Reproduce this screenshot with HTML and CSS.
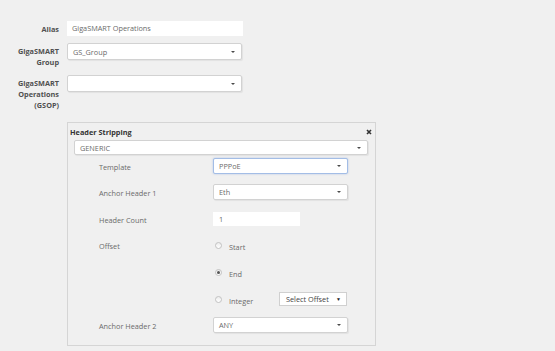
FILE: index.html
```html
<!DOCTYPE html>
<html>
<head>
<title>GigaSMART Operations</title>
<link rel="stylesheet" href="styles.css">
</head>
<body>
<div class="form">
  <div class="label">Alias</div>
  <div class="input">GigaSMART Operations</div>

  <div class="label">GigaSMART<br>Group</div>
  <div class="select big"><span>GS_Group</span><i class="caret"></i></div>

  <div class="label">GigaSMART<br>Operations<br>(GSOP)</div>
  <div class="select big"><span></span><i class="caret"></i></div>

  <div></div>
  <div class="panel">
    <div class="panel-head">
      <span>Header Stripping</span>
      <svg class="close" width="6" height="6" viewBox="0 0 6 6"><path d="M1 1L5 5M5 1L1 5" stroke="#333" stroke-width="1.6"/></svg>
    </div>
    <div class="select generic"><span>GENERIC</span><i class="caret"></i></div>

    <div class="rows">
      <div class="row">
        <div class="row-label">Template</div>
        <div class="select small focus"><span>PPPoE</span><i class="caret"></i></div>
      </div>
      <div class="row">
        <div class="row-label">Anchor Header 1</div>
        <div class="select small"><span>Eth</span><i class="caret"></i></div>
      </div>
      <div class="row sp">
        <div class="row-label">Header Count</div>
        <div class="count">1</div>
      </div>
      <div class="row">
        <div class="row-label">Offset</div>
        <div class="radio"><i class="dot"></i><span>Start</span></div>
      </div>
      <div class="row sp">
        <div class="row-label"></div>
        <div class="radio"><i class="dot on"></i><span>End</span></div>
      </div>
      <div class="row sp">
        <div class="row-label"></div>
        <div class="radio-line">
          <div class="radio wide"><i class="dot"></i><span>Integer</span></div>
          <div class="native"><span>Select Offset</span><span class="tri">&#9660;</span></div>
        </div>
      </div>
      <div class="row">
        <div class="row-label">Anchor Header 2</div>
        <div class="select small"><span>ANY</span><i class="caret"></i></div>
      </div>
    </div>
  </div>
</div>
</body>
</html>
```

FILE: styles.css
```css
/* GigaSMART operation form */

body
{ margin: 0;
background: #f0f0f0;
font-family: "Open Sans", sans-serif;
font-size: 7.3px;
color: #6a6a6a;
}

.form
{ display: grid;
grid-template-columns: 59px auto;
column-gap: 8px;
row-gap: 7px;
padding-top: 21px;
align-items: start;
}

.label
{ text-align: right;
font-weight: bold;
color: #505050;
line-height: 11px;
padding-top: 3px;
}

.input
{ width: 176px;
height: 15px;
line-height: 15px;
box-sizing: border-box;
padding-left: 5px;
background: #fff;
}

.select
{ box-sizing: border-box;
display: flex;
align-items: center;
justify-content: space-between;
background: #fff;
border: 1px solid #d2d2d2;
border-radius: 2px;
box-shadow: 1px 1px 1px rgba(0, 0, 0, 0.06);
padding: 0 6px 0 5px;
}

.select.big
{ width: 175px;
height: 17px;
}

.select.small
{ width: 135px;
height: 16px;
}

.select.focus
{ border-color: #a3bde6;
box-shadow: 0 0 2px rgba(110, 150, 220, 0.5);
}

.caret
{ width: 0;
height: 0;
border-left: 2px solid transparent;
border-right: 2px solid transparent;
border-top: 2.5px solid #4a4a4a;
}

/* Header stripping panel */

.panel
{ width: 309px;
box-sizing: border-box;
margin-top: 4px;
border: 1px solid #d5d5d5;
}

.panel-head
{ display: flex;
justify-content: space-between;
align-items: center;
height: 17px;
padding: 0 3px 0 2px;
font-weight: bold;
color: #333;
}

.select.generic
{ height: 15px;
margin: 0 7px 0 6px;
}

.rows
{ display: flex;
flex-direction: column;
gap: 10px;
padding: 3px 0 12px 31px;
}

.row
{ display: grid;
grid-template-columns: 114px auto;
align-items: center;
height: 16px;
}

.row-label
{ padding-top: 2px;
}

.row.sp
{ margin-top: 1px;
}

.count
{ width: 87px;
height: 14px;
line-height: 14px;
box-sizing: border-box;
padding-left: 6px;
background: #fff;
}

.radio
{ display: flex;
align-items: center;
gap: 7px;
padding-left: 2px;
}

.radio span
{ padding-top: 3px;
}

.radio.wide
{ width: 64px;
}

.dot
{ width: 7px;
height: 7px;
box-sizing: border-box;
border: 1px solid #c2c2c2;
border-radius: 50%;
background: linear-gradient(#ececec, #fff);
display: flex;
align-items: center;
justify-content: center;
}

.dot.on::after
{ content: "";
width: 3px;
height: 3px;
border-radius: 50%;
background: #555;
}

.radio-line
{ display: flex;
align-items: center;
}

.native
{ box-sizing: border-box;
width: 68px;
height: 14px;
display: flex;
align-items: center;
justify-content: space-between;
padding: 0 5px 0 6px;
background: #fff;
border: 1px solid #d0d0d0;
color: #444;
}

.tri
{ font-size: 5px;
color: #222;
}
```
